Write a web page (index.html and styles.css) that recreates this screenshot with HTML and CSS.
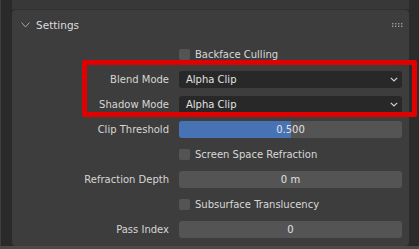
FILE: index.html
```html
<!DOCTYPE html>
<html>
<head>
<meta charset="utf-8">
<link rel="stylesheet" href="styles.css">
</head>
<body>
<div class="root">
  <div class="edge"></div>
  <div class="main">
    <div class="prev-header"></div>
    <div class="panel">
      <div class="panel-header">
        <svg class="chev" width="9" height="6" viewBox="0 0 9 6"><path d="M0.5 0.5 L4.5 5 L8.5 0.5" fill="none" stroke="#a8a8a8" stroke-width="1"/></svg>
        <span class="title">Settings</span>
        <svg class="grip" width="12" height="4" viewBox="0 0 12 4">
          <g fill="#9a9a9a">
            <rect x="0" y="0" width="1.4" height="1.4"/><rect x="3" y="0" width="1.4" height="1.4"/><rect x="6" y="0" width="1.4" height="1.4"/><rect x="9" y="0" width="1.4" height="1.4"/>
            <rect x="0" y="2.6" width="1.4" height="1.4"/><rect x="3" y="2.6" width="1.4" height="1.4"/><rect x="6" y="2.6" width="1.4" height="1.4"/><rect x="9" y="2.6" width="1.4" height="1.4"/>
          </g>
        </svg>
      </div>
      <div class="rows">
        <div class="row"><div class="label"></div><div class="check"><span class="box"></span><span>Backface Culling</span></div></div>
        <div class="row"><div class="label">Blend Mode</div><div class="field dropdown"><span>Alpha Clip</span><svg width="8" height="5" viewBox="0 0 8 5"><path d="M0.8 0.8 L4 4 L7.2 0.8" fill="none" stroke="#cfcfcf" stroke-width="1.2"/></svg></div></div>
        <div class="row"><div class="label">Shadow Mode</div><div class="field dropdown"><span>Alpha Clip</span><svg width="8" height="5" viewBox="0 0 8 5"><path d="M0.8 0.8 L4 4 L7.2 0.8" fill="none" stroke="#cfcfcf" stroke-width="1.2"/></svg></div></div>
        <div class="row"><div class="label">Clip Threshold</div><div class="field slider"><div class="fill" style="width:50%"></div><span class="val">0.500</span></div></div>
        <div class="row"><div class="label"></div><div class="check"><span class="box"></span><span>Screen Space Refraction</span></div></div>
        <div class="row"><div class="label">Refraction Depth</div><div class="field num"><span class="val">0 m</span></div></div>
        <div class="row"><div class="label"></div><div class="check"><span class="box"></span><span>Subsurface Translucency</span></div></div>
        <div class="row"><div class="label">Pass Index</div><div class="field num"><span class="val">0</span></div></div>
      </div>
    </div>
  </div>
  <div class="highlight"></div>
</div>
</body>
</html>
```
FILE: styles.css
```css
* { box-sizing: border-box; }
html, body { margin: 0; padding: 0; }
body {
  width: 419px;
  height: 249px;
  overflow: hidden;
  background: #2b2b2b;
  font-family: "DejaVu Sans", sans-serif;
  font-size: 10px;
  color: #d6d6d6;
}
.root {
  position: relative;
  width: 419px;
  height: 249px;
  display: flex;
  background: #2b2b2b;
  border-bottom: 3px solid #4a4a4a;
}
.edge {
  width: 12px;
  flex: none;
  background: #2a2a2a;
  border-left: 1px solid #3e3e3e;
}
.main {
  flex: 1;
  display: flex;
  flex-direction: column;
  padding-right: 10px;
}
.prev-header {
  height: 10px;
  background: #383838;
  border-bottom: 1px solid #303030;
  flex: none;
}
.panel {
  flex: 1;
  background: #3d3d3d;
  border-radius: 4px;
  display: flex;
  flex-direction: column;
}
.panel-header {
  height: 32px;
  flex: none;
  display: flex;
  align-items: center;
  padding: 0 5px 3px 9px;
}
.chev { margin-right: 6px; margin-top: 1px; }
.title { font-size: 10.5px; color: #dcdcdc; flex: 1; }
.rows { display: flex; flex-direction: column; padding-right: 7px; }
.row {
  height: 25px;
  flex: none;
  display: flex;
  align-items: center;
}
.label {
  width: 167px;
  flex: none;
  text-align: right;
  padding-right: 10px;
  color: #d6d6d6;
}
.field {
  flex: 1;
  height: 17px;
  border-radius: 3px;
  display: flex;
  align-items: center;
  position: relative;
  overflow: hidden;
}
.dropdown {
  background: #282828;
  justify-content: space-between;
  padding: 0 4px 0 7px;
  color: #e2e2e2;
}
.slider, .num {
  background: #545454;
  justify-content: center;
  color: #e2e2e2;
}
.fill {
  position: absolute;
  left: 0; top: 0; bottom: 0;
  background: #4772b3;
}
.val { position: relative; }
.check {
  display: flex;
  align-items: center;
  gap: 5px;
  color: #d8d8d8;
}
.box {
  width: 11px;
  height: 11px;
  border-radius: 2px;
  background: #545454;
}
.highlight {
  position: absolute;
  left: 82px;
  top: 60px;
  width: 335px;
  height: 57px;
  border: 5px solid #e00000;
  border-radius: 2px;
}
```
